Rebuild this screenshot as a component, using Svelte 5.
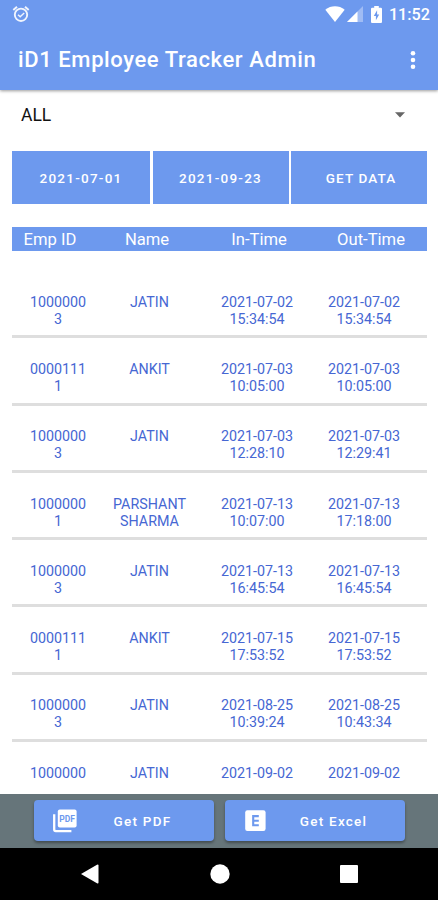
<script lang="ts">
  interface Entry {
    id: string;
    name: string;
    inTime: string;
    outTime: string;
  }

  const columns = ['Emp ID', 'Name', 'In-Time', 'Out-Time'];

  const entries: Entry[] = [
    { id: '10000003', name: 'JATIN', inTime: '2021-07-02 15:34:54', outTime: '2021-07-02 15:34:54' },
    { id: '00001111', name: 'ANKIT', inTime: '2021-07-03 10:05:00', outTime: '2021-07-03 10:05:00' },
    { id: '10000003', name: 'JATIN', inTime: '2021-07-03 12:28:10', outTime: '2021-07-03 12:29:41' },
    { id: '10000001', name: 'PARSHANT SHARMA', inTime: '2021-07-13 10:07:00', outTime: '2021-07-13 17:18:00' },
    { id: '10000003', name: 'JATIN', inTime: '2021-07-13 16:45:54', outTime: '2021-07-13 16:45:54' },
    { id: '00001111', name: 'ANKIT', inTime: '2021-07-15 17:53:52', outTime: '2021-07-15 17:53:52' },
    { id: '10000003', name: 'JATIN', inTime: '2021-08-25 10:39:24', outTime: '2021-08-25 10:43:34' },
    { id: '1000000', name: 'JATIN', inTime: '2021-09-02', outTime: '2021-09-02' }
  ];

  let fromDate = $state('2021-07-01');
  let toDate = $state('2021-09-23');
</script>

<div class="screen">
  <header class="top">
    <div class="status">
      <svg class="alarm" viewBox="0 0 18 18" width="18" height="18" fill="none" stroke="currentColor">
        <circle cx="9" cy="9.8" r="6.2" stroke-width="1.9" />
        <path d="M1.3 5 5 1.8M16.7 5 13 1.8" stroke-width="2" />
        <path d="m6 9.7 2.2 2.1L12.2 8" stroke-width="1.5" />
      </svg>
      <div class="status__right">
        <svg class="wifi" viewBox="0 0 20 16" width="20" height="16" fill="currentColor">
          <path d="M10 16 .3 3.7C6-.9 14-.9 19.7 3.7z" />
        </svg>
        <svg class="signal" viewBox="0 0 16 16" width="16" height="16" fill="currentColor">
          <path d="M0 16 16 0v16z" opacity=".35" />
          <path d="M0 16 10.5 5.5V16z" />
        </svg>
        <svg class="battery" viewBox="0 0 11 17" width="11" height="17">
          <path d="M3.2 0h4.6v1.8h2.1q1.1 0 1.1 1.1v13q0 1.1-1.1 1.1H1.1Q0 17 0 15.9v-13q0-1.1 1.1-1.1h2.1z" fill="currentColor" />
          <path d="M6.1 4.2 2.8 10h2.1v4.2L8.2 8.5H6.1z" fill="#6d99ee" />
        </svg>
        <span class="clock">11:52</span>
      </div>
    </div>
    <div class="toolbar">
      <h1>iD1 Employee Tracker Admin</h1>
      <button class="more" aria-label="More options">
        <svg viewBox="0 0 6 18" width="6" height="18" fill="currentColor">
          <circle cx="3" cy="2.3" r="2.3" />
          <circle cx="3" cy="9" r="2.3" />
          <circle cx="3" cy="15.7" r="2.3" />
        </svg>
      </button>
    </div>
  </header>

  <main>
    <div class="spinner">
      <span>ALL</span>
      <svg viewBox="0 0 10 6" width="10" height="6"><path d="M0 .3h10L5 5.6z" fill="#666" /></svg>
    </div>

    <div class="filters">
      <button>{fromDate}</button>
      <button>{toDate}</button>
      <button>GET DATA</button>
    </div>

    <div class="head">
      {#each columns as column}
        <span>{column}</span>
      {/each}
    </div>

    <div class="list">
      {#each entries as entry}
        <div class="row">
          <span class="row__id">{entry.id}</span>
          <span>{entry.name}</span>
          <span>{entry.inTime}</span>
          <span>{entry.outTime}</span>
        </div>
      {/each}
    </div>
  </main>

  <footer class="actions">
    <button>
      <svg viewBox="0 0 24 24" width="24" height="24">
        <path d="M1.2 5.2v15.4q0 1.6 1.6 1.6h15.6" fill="none" stroke="#fff" stroke-width="2.3" />
        <rect x="4.8" y=".4" width="18.8" height="18" rx="2" fill="#fff" />
        <text x="14.2" y="12.6" text-anchor="middle" class="pdf-label">PDF</text>
      </svg>
      <span>Get PDF</span>
    </button>
    <button>
      <svg viewBox="0 0 24 24" width="24" height="24">
        <rect x="1.2" y="1.3" width="20.4" height="20.6" rx="2.2" fill="#fff" />
        <path d="M14.8 7.1H9.2v9.2h5.6M9.2 11.7h5.6" fill="none" stroke="#6d99ee" stroke-width="2.1" />
      </svg>
      <span>Get Excel</span>
    </button>
  </footer>

  <nav class="navbar">
    <svg viewBox="0 0 18 20" width="18" height="20" fill="#fff"><path d="M0 10 16 .8q1.5-.6 1.5.8v16.8q0 1.4-1.5.8z" /></svg>
    <svg viewBox="0 0 20 20" width="20" height="20" fill="#fff"><circle cx="10" cy="10" r="9.7" /></svg>
    <svg viewBox="0 0 18 18" width="18" height="18" fill="#fff"><rect width="18" height="18" rx="1" /></svg>
  </nav>
</div>

<style>
  :global(body) {
    margin: 0;
    background: #fff;
  }

  .screen {
    display: flex;
    flex-direction: column;
    height: 900px;
    overflow: hidden;
    background: #fff;
    font-family: Roboto, "Liberation Sans", sans-serif;
  }

  button {
    border: 0;
    padding: 0;
    font: inherit;
    color: #fff;
    background: #6d99ee;
  }

  svg {
    display: block;
    flex-shrink: 0;
  }

  .top {
    height: 90px;
    flex-shrink: 0;
    color: #fff;
    background: #6d99ee;
    box-shadow: 0 1px 3px rgba(0, 0, 0, 0.4);
  }

  .status {
    display: flex;
    align-items: center;
    justify-content: space-between;
    height: 28px;
    padding: 0 8px 0 12px;
  }

  .alarm {
    opacity: 0.9;
  }

  .status__right {
    display: flex;
    align-items: center;
  }

  .signal {
    margin-left: 2px;
  }

  .battery {
    margin-left: 8px;
  }

  .clock {
    margin-left: 7px;
    font-size: 16.2px;
    font-weight: 500;
    line-height: 29px;
  }

  .toolbar {
    display: flex;
    align-items: center;
    justify-content: space-between;
    height: 63px;
    padding: 0 22px 0 18px;
  }

  h1 {
    margin: 0;
    font-size: 22px;
    font-weight: 500;
    letter-spacing: 0.6px;
    white-space: nowrap;
  }

  .more {
    background: none;
  }

  main {
    flex: 1;
    min-height: 0;
    overflow: hidden;
    padding: 0 11px 0 12px;
  }

  .spinner {
    display: flex;
    align-items: center;
    justify-content: space-between;
    height: 50px;
    padding: 0 22px 0 9px;
    margin-bottom: 11px;
    font-size: 17.5px;
    color: #111;
  }

  .filters {
    display: grid;
    grid-template-columns: 138px 136px 136px;
    justify-content: space-between;
    height: 53px;
    margin-bottom: 23px;
  }

  .filters button {
    font-size: 13.5px;
    font-weight: 500;
    letter-spacing: 1.25px;
  }

  .filters button:last-child {
    padding-left: 4px;
    letter-spacing: 1.1px;
  }

  .head {
    display: grid;
    grid-template-columns: 76px 118px 106px 118px;
    height: 24px;
    line-height: 26px;
    font-size: 16.6px;
    text-align: center;
    white-space: nowrap;
    color: #fff;
    background: #6d99ee;
  }

  .list {
    padding-top: 20px;
  }

  .row {
    display: grid;
    grid-template-columns: 62px 87px 94px 86px;
    column-gap: 17px;
    height: 67.3px;
    box-sizing: border-box;
    padding: 22.7px 0 0 15px;
    border-bottom: 3px solid #dedede;
    font-size: 14.3px;
    line-height: 17px;
    text-align: center;
    color: #4667d3;
  }

  .row__id {
    overflow-wrap: anywhere;
  }

  .actions {
    display: flex;
    gap: 11px;
    height: 54px;
    box-sizing: border-box;
    flex-shrink: 0;
    padding: 6px 33px 0 34px;
    background: #66757a;
  }

  .actions button {
    display: flex;
    align-items: center;
    width: 180px;
    height: 41px;
    padding: 0 18px 0 19px;
    border-radius: 4px;
    box-shadow: 0 2px 3px rgba(0, 0, 0, 0.35);
    font-size: 13.5px;
    font-weight: 500;
    letter-spacing: 1.25px;
  }

  .actions span {
    flex: 1;
    padding-left: 12px;
    text-align: center;
  }

  .pdf-label {
    font-size: 8.5px;
    font-weight: 700;
    letter-spacing: 0;
    fill: #6d99ee;
  }

  .navbar {
    display: flex;
    align-items: center;
    justify-content: space-between;
    height: 52px;
    flex-shrink: 0;
    padding: 0 80px 0 81px;
    background: #000;
  }
</style>
